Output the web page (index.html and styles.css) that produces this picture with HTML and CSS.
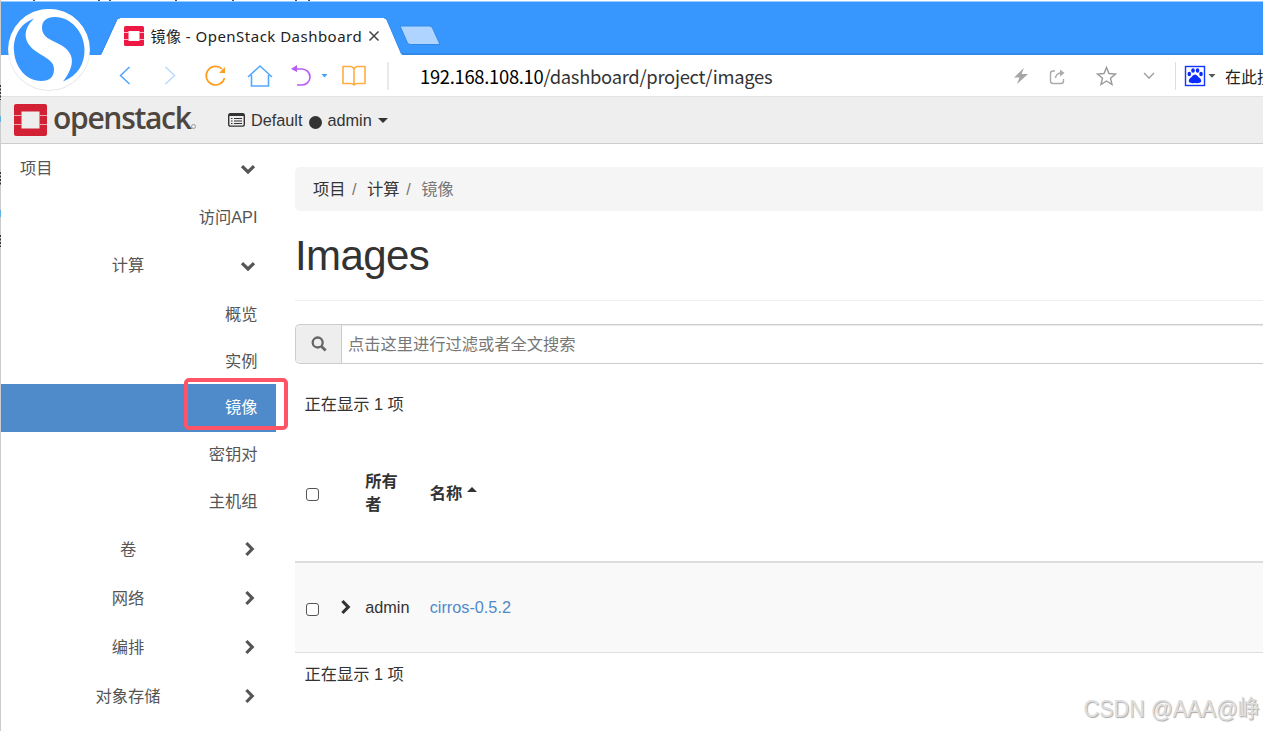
FILE: index.html
```html
<!DOCTYPE html>
<html lang="zh-CN">
<head>
<meta charset="utf-8">
<title>镜像 - OpenStack Dashboard</title>
<link rel="stylesheet" href="styles.css">
</head>
<body>
<svg width="0" height="0" class="defs">
  <defs>
    <symbol id="down" viewBox="0 0 16 11"><path d="M2 2.2 8 8 14 2.2" fill="none" stroke="currentColor" stroke-width="3.2"/></symbol>
    <symbol id="right" viewBox="0 0 11 16"><path d="M2.4 2 8.2 8 2.4 14" fill="none" stroke="currentColor" stroke-width="3.2"/></symbol>
  </defs>
</svg>
<div class="window">
  <div class="tabstrip">
    <svg class="tab-shape" width="1263" height="55" viewBox="0 0 1263 55">
      <path d="M1 1.5H1263V55H1z" fill="#3797ff"/>
      <path d="M398 54H1263" stroke="#318ae9" stroke-width="2"/>
      <path d="M101 55 117 19.500Q118 18 120 18H384Q386 18 387 20L402 55z" fill="#fff"/>
      <path d="M101 54 117 19.500Q118 18 120 18M384 18Q386 18 387 20L401.500 54" fill="none" stroke="#3189e8"/>
      <path d="M400 26H429.500Q431.500 26 432.500 28L440 44.500H411Q408.500 44.500 407.500 43z" fill="#afd4ff" stroke="#3189e8"/>
      <path d="M33 .5h6M98 .5h5M109 .5h5M175 .5h5M232 .5h4M295 .5h4M308 .5h4" stroke="#345a82" stroke-dasharray="2 4"/>
    </svg>
    <div class="tab">
      <svg class="favicon" width="20" height="20" viewBox="0 0 20 20"><rect width="20" height="20" rx="1.500" fill="#ed1844"/><rect x="4.500" y="5" width="11" height="10" fill="#fff"/><path d="M0 6.500h5M0 13.500h5M15 6.500h5M15 13.500h5" stroke="#ffb5c4"/></svg>
      <span class="tab-title">镜像 - OpenStack Dashboard</span>
      <svg class="tab-close" width="12" height="12" viewBox="0 0 12 12"><path d="M1.500 1.500l9 9M10.500 1.500l-9 9" stroke="#444" stroke-width="1.500"/></svg>
    </div>
    <svg class="sogou" width="84" height="84" viewBox="0 0 84 84">
      <circle cx="42" cy="43" r="41" fill="#e4e8ec"/>
      <circle cx="42" cy="42.500" r="40.500" fill="#fff"/>
      <path d="M27 11.500C12 17 6 31 7 44 8 60 19 74 34 74 43 74 47 70 47 62 47 54 39 51 30 45 16 36 15 23 27 11.500z" fill="#3797ff"/>
      <path d="M56 74.500C71 69 78 56 77.500 42 77 25 64 10 48 10 39 10 35 14 35 21 35 30 44 33 52 37 68 45 69 58 56 74.500z" fill="#3797ff"/>
    </svg>
  </div>

  <div class="toolbar">
    <svg class="nav-icons" width="392" height="42" viewBox="0 0 392 42" fill="none">
      <path d="M129.500 12 120.500 20.500 129.500 29" stroke="#4fa3ff" stroke-width="1.500"/>
      <path d="M165.500 12 174.500 20.500 165.500 29" stroke="#b9dbff" stroke-width="1.500"/>
      <path d="M222 14A9.300 9.300 0 1 0 224.500 23" stroke="#ff9d1c" stroke-width="1.700"/><path d="M225 12v6h-6z" fill="#ff9d1c"/>
      <path d="M248 22 260 11 272 22M251.500 20V31H268.500V20" stroke="#55a8ff" stroke-width="1.600"/>
      <path d="M295 14H302a8 8 0 0 1 0 16H297" stroke="#b85cf5" stroke-width="1.600"/><path d="M291 14l6-4v7z" fill="#b85cf5"/>
      <path d="M321.500 19h6l-3 3.500z" fill="#42a0f5"/>
      <path d="M354 14Q353 11.500 350 11.500H343V28.500H350Q353 28.500 354 30Q355 28.500 358 28.500H365V11.500H358Q355 11.500 354 14zM354 14V30" stroke="#ffad42" stroke-width="1.600" stroke-linejoin="round"/>
      <path d="M388 7V35" stroke="#e5e5e8" stroke-width="1.600"/>
    </svg>
    <span class="url">192.168.108.10<span class="path">/dashboard/project/images</span></span>
    <svg class="right-icons" width="218" height="42" viewBox="1000 0 218 42" fill="none">
      <path d="M1024 13 1014 22.500H1019.500L1017 29 1028 19H1021.500z" fill="#a5a5a5"/>
      <path d="M1055 16H1053Q1050.500 16 1050.500 18.500V26Q1050.500 28.500 1053 28.500H1061Q1063.500 28.500 1063.500 26V24M1055.500 23Q1056 18 1062 18" stroke="#aaa" stroke-width="1.400"/><path d="M1060 14.500l4.500 3.500-4.500 3.500z" fill="#aaa"/>
      <path d="M1106.500 12.500 1109 18.500 1115.500 19 1110.500 23.200 1112 29.500 1106.500 26 1101 29.500 1102.500 23.200 1097.500 19 1104 18.500z" stroke="#999" stroke-width="1.400"/>
      <path d="M1144 18 1149 23 1154 18" stroke="#999" stroke-width="1.300"/>
      <path d="M1175.500 7V35" stroke="#ddd"/>
      <rect x="1185.500" y="11.500" width="19" height="19" fill="#fff" stroke="#1237ff" stroke-width="1.400"/>
      <g fill="#0b2cff"><ellipse cx="1189.300" cy="19" rx="1.800" ry="2.300"/><ellipse cx="1193" cy="15.500" rx="1.800" ry="2.300"/><ellipse cx="1197.500" cy="15.500" rx="1.800" ry="2.300"/><ellipse cx="1201" cy="19" rx="1.800" ry="2.300"/><path d="M1195 19.500Q1197 19.500 1198.500 22 1202 24.500 1201 27 1200 28.500 1195 28 1190 28.500 1189 27 1188 24.500 1191.500 22 1193 19.500 1195 19.500z"/></g>
      <path d="M1208.500 19h7l-3.500 3.800z" fill="#555"/>
    </svg>
    <span class="search-hint">在此搜索</span>
  </div>

  <header class="topbar">
    <svg class="os-mark" width="33" height="32" viewBox="0 0 33 32"><rect width="33" height="32" rx="2" fill="#d22034"/><rect x="7.500" y="7.500" width="18" height="17" fill="#eee"/><path d="M0 11.500h7.500M0 20.500h7.500M25.500 11.500h7.500M25.500 20.500h7.500" stroke="#eda8ae"/></svg>
    <span class="os-name">openstack</span><span class="os-dot"></span>
    <svg class="list-icon" width="17" height="14" viewBox="0 0 17 14"><rect x=".7" y=".7" width="15.600" height="12.400" rx="1.500" fill="none" stroke="#333" stroke-width="1.400"/><path d="M1 2h15" stroke="#333" stroke-width="2"/><path d="M3 5.500h1.500M3 8h1.500M3 10.500h1.500M6 5.500h8M6 8h8M6 10.500h8" stroke="#333" stroke-width="1.200"/></svg>
    <span class="domain">Default</span><span class="bullet"></span><span class="project">admin</span>
    <span class="caret"></span>
  </header>

  <div class="main">
    <nav class="sidebar">
      <div class="row top"><span>项目</span><svg class="chev-d"><use href="#down"/></svg></div>
      <div class="row leaf h48">访问API</div>
      <div class="row group"><span>计算</span><svg class="chev-d"><use href="#down"/></svg></div>
      <div class="row leaf h48">概览</div>
      <div class="row leaf h46">实例</div>
      <div class="row leaf h48 active">镜像<span class="highlight"></span></div>
      <div class="row leaf h45">密钥对</div>
      <div class="row leaf h48">主机组</div>
      <div class="row group"><span>卷</span><svg class="chev-r"><use href="#right"/></svg></div>
      <div class="row group"><span>网络</span><svg class="chev-r"><use href="#right"/></svg></div>
      <div class="row group"><span>编排</span><svg class="chev-r"><use href="#right"/></svg></div>
      <div class="row group"><span>对象存储</span><svg class="chev-r"><use href="#right"/></svg></div>
    </nav>
    <section class="content">
      <div class="breadcrumb"><span>项目</span><i>/</i><span>计算</span><i>/</i><span class="current">镜像</span></div>
      <h1>Images</h1>
      <div class="search">
        <div class="addon"><svg width="16" height="16" viewBox="0 0 16 16"><circle cx="6.700" cy="6.500" r="5" fill="none" stroke="#666" stroke-width="2.300"/><path d="M10.500 10.500 14.700 14.500" stroke="#666" stroke-width="2.800"/></svg></div>
        <div class="field">点击这里进行过滤或者全文搜索</div>
      </div>
      <div class="count upper">正在显示 1 项</div>
      <div class="grid head">
        <span class="check"></span><span></span><span>所有者</span><span class="sort">名称<i class="up"></i></span>
      </div>
      <div class="grid item">
        <span class="check"></span><svg class="expand"><use href="#right"/></svg><span>admin</span><a>cirros-0.5.2</a>
      </div>
      <div class="count lower">正在显示 1 项</div>
    </section>
  </div>
  <div class="watermark">CSDN @AAA@峥</div>
  <svg class="edge" width="2" height="731" viewBox="0 0 2 731"><path d="M.5 0V731" stroke="#ccc"/><path d="M.5 85v15M.5 172v14M.5 235v12" stroke="#333" stroke-dasharray="2 1.500"/><path d="M.5 116v6M.5 210v7" stroke="#60b0e0"/></svg>
</div>
</body>
</html>
```

FILE: styles.css
```css
* { box-sizing: border-box; }
body { margin: 0; background: #fff; color: #333; font: 16.25px/23px "Liberation Sans", "Noto Sans CJK SC", sans-serif; }
.defs { position: absolute; }
.window { position: relative; width: 1263px; height: 731px; overflow: hidden; display: flex; flex-direction: column; }
.tabstrip { position: relative; height: 55px; flex: none; padding-top: 17px; }
.tab-shape { position: absolute; left: 0; top: 0; }
.tab { position: relative; display: flex; align-items: center; height: 38px; padding-left: 124px; }
.tab-title { width: 212px; margin-left: 6.5px; font: 15px/22px "Noto Sans", "Noto Sans CJK SC", sans-serif; letter-spacing: .48px; white-space: nowrap; color: #222; }
.tab-close { margin-left: 5.5px; }
.sogou { position: absolute; left: 7px; top: 7px; z-index: 2; }
.toolbar { height: 42px; flex: none; display: flex; align-items: center; border-bottom: 1px solid #e3e3e3; }
.nav-icons, .right-icons { flex: none; }
.url { width: 580px; flex: none; margin-left: 28px; font: 18.4px/28px "Noto Sans CJK SC", sans-serif; letter-spacing: -.3px; color: #000; white-space: nowrap; }
.path { color: #333; }
.search-hint { flex: none; margin-left: 7px; font: 16px/24px "Noto Sans CJK SC", sans-serif; color: #222; white-space: nowrap; }
.topbar { height: 47px; flex: none; display: flex; align-items: center; padding-left: 14px; background: #eee; border-bottom: 1px solid #ccc; }
.os-name { width: 137px; margin: -4px 0 0 6px; font: 600 30px/40px "Open Sans", sans-serif; letter-spacing: -1.3px; color: #4f463f; }
.os-dot { width: 5px; height: 5px; margin: 13px 0 0 1px; border: 1px solid #999; border-radius: 50%; }
.list-icon { margin-left: 32px; }
.domain { margin-left: 6px; }
.bullet { width: 13px; height: 13px; margin: 4px 6px 0; border-radius: 50%; background: #333; }
.caret { margin-left: 6px; border: 5px solid transparent; border-top-color: #333; border-bottom: 0; }
.main { display: flex; flex: 1; }
.sidebar { width: 276px; flex: none; color: #555; }
.row { height: 49px; display: flex; align-items: center; }
.h48 { height: 48px; }
.h46 { height: 46px; }
.h45 { height: 45px; }
.top { justify-content: space-between; padding: 0 20px; }
.leaf { justify-content: flex-end; padding-right: 18.6px; }
.group { padding-right: 20px; }
.group span { width: 256px; text-align: center; margin-right: -16px; }
.chev-d { width: 16px; height: 11px; flex: none; margin-top: 1px; }
.chev-r { width: 11px; height: 16px; flex: none; margin: -2px 0 0 4px; }
.active { position: relative; background: #4f8bca; color: #fff; padding-bottom: 2px; }
.highlight { position: absolute; left: 184px; top: -6px; width: 104px; height: 52px; border: 4px solid #fd5468; border-radius: 5px; }
.content { flex: 1; min-width: 0; padding: 23px 0 0 19px; }
.breadcrumb { height: 44px; display: flex; align-items: center; padding-left: 18px; background: #f5f5f5; border-radius: 5px 0 0 5px; }
.breadcrumb i { width: 21.6px; padding-left: 6.6px; font-style: normal; color: #777; }
.current { color: #777; }
h1 { height: 90px; margin: 0 0 23px; padding-top: 16px; font-size: 42px; line-height: 58px; font-weight: 400; letter-spacing: -.6px; border-bottom: 1px solid #eee; }
.search { height: 40px; display: flex; border: 1px solid #ccc; border-right: 0; border-radius: 5px 0 0 5px; overflow: hidden; }
.addon { width: 46px; display: flex; align-items: center; justify-content: center; background: #eee; border-right: 1px solid #ccc; }
.field { flex: 1; padding: 8px 6px; color: #777; box-shadow: inset 0 1px 1px #e9e9e9; }
.count { padding-left: 9.4px; }
.upper { margin-top: 29px; height: 33px; }
.grid { display: grid; grid-template-columns: 32px 27px 64.5px 1fr; align-items: center; padding-left: 11.2px; }
.head { height: 137px; font-weight: 700; border-bottom: 2px solid #ddd; padding-bottom: 1px; }
.head > span:nth-child(3) { width: 40px; }
.item { height: 90px; background: #f9f9f9; border-bottom: 1px solid #ddd; }
.item a { color: #5089ca; }
.check { width: 13px; height: 13px; border: 1.5px solid #555; border-radius: 3px; background: #fff; margin-top: 3px; }
.expand { width: 11px; height: 16px; margin: -1px 0 0 2px; }
.sort { display: flex; align-items: center; }
.up { margin: -7px 0 0 5px; border: 5px solid transparent; border-bottom-color: #333; border-top: 0; }
.lower { margin-top: 10px; }
.watermark { position: absolute; right: 4px; bottom: 6px; font: 24px/32px "Liberation Sans", "Noto Sans CJK SC", sans-serif; white-space: nowrap; color: #dedede; text-shadow: 1px 1px 1px #aaa; transform: scaleX(.9); transform-origin: right; }
.edge { position: absolute; left: 0; top: 0; }
```
